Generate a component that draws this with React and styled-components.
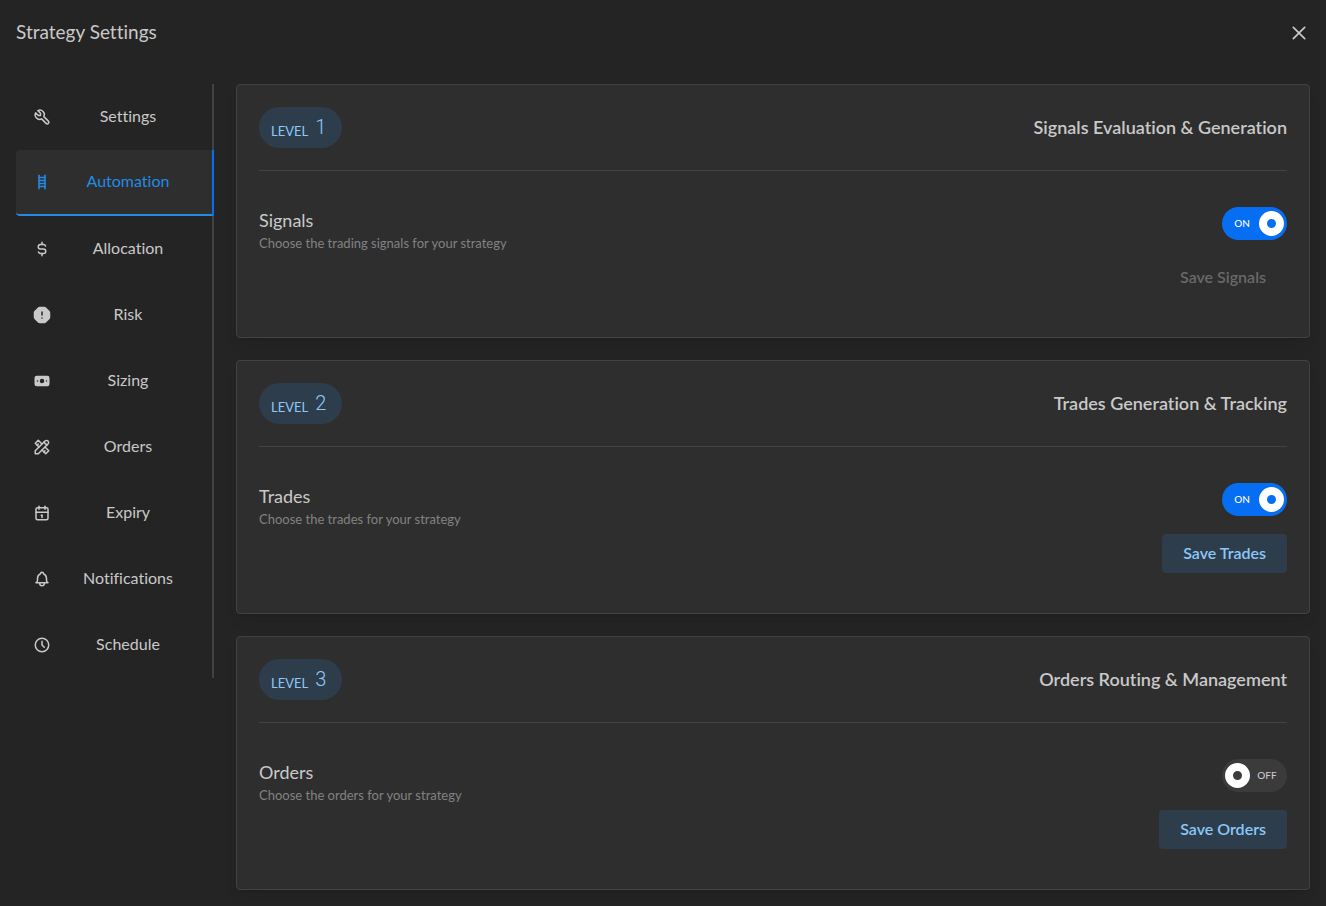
import React, { useState } from 'react';
import styled, { createGlobalStyle } from 'styled-components';
import {
  TbTool,
  TbLadder,
  TbCurrencyDollar,
  TbAlertOctagonFilled,
  TbCashBanknoteFilled,
  TbTools,
  TbCalendar,
  TbBell,
  TbClock,
} from 'react-icons/tb';
import { RxCross2 } from 'react-icons/rx';

const GlobalStyle = createGlobalStyle`
  * {
    box-sizing: border-box;
  }

  body {
    margin: 0;
    background: #242424;
    color: #c9c9c9;
    font-family: Lato, "Open Sans", sans-serif;
    font-size: 16px;
    font-variant-ligatures: none;
    line-height: 24px;
  }

  button {
    font-family: inherit;
    font-variant-ligatures: none;
  }
`;

const Page = styled.div`
  padding: 16px;
`;

const Header = styled.header`
  display: flex;
  align-items: center;
  justify-content: space-between;
  height: 34px;
  margin-bottom: 34px;
`;

const Title = styled.h1`
  margin: 0;
  padding-bottom: 2px;
  font-size: 19px;
  font-weight: 400;
`;

const CloseButton = styled.button`
  display: flex;
  padding: 0;
  border: 0;
  background: none;
  color: #c9c9c9;
  font-size: 22px;
  cursor: pointer;
`;

const Body = styled.div`
  display: flex;
  align-items: flex-start;
  gap: 22px;
`;

const TabList = styled.nav`
  display: flex;
  flex-direction: column;
  flex: 0 0 198px;
`;

const Tab = styled.button`
  display: flex;
  align-items: center;
  height: 66px;
  padding: 0 16px;
  border: 0 solid #424242;
  border-right-width: 2px;
  background: none;
  color: #c9c9c9;
  font-size: 16px;
  cursor: pointer;

  &[aria-current='page'] {
    border-bottom: 2px solid #228be6;
    border-right-color: #066ef2;
    border-radius: 4px 0 0 4px;
    background: #2e2e2e;
    color: #228be6;
  }
`;

const TabIcon = styled.span`
  display: flex;
  width: 20px;
  justify-content: center;
  font-size: 18px;
`;

const TabLabel = styled.span`
  flex: 1;
  padding: 0 0 3px 8px;
  text-align: center;
`;

const Levels = styled.main`
  display: flex;
  flex: 1;
  flex-direction: column;
  gap: 22px;
  min-width: 0;
`;

const Card = styled.section`
  padding: 22px 22px 40px;
  border: 1px solid #424242;
  border-radius: 4px;
  background: #2e2e2e;
  box-shadow: 0 1px 3px rgba(0, 0, 0, 0.05), 0 10px 15px -5px rgba(0, 0, 0, 0.1);
`;

const CardHeader = styled.div`
  display: flex;
  align-items: center;
  justify-content: space-between;
  padding-bottom: 22px;
  border-bottom: 1px solid #424242;
`;

const LevelBadge = styled.div`
  display: flex;
  align-items: flex-start;
  gap: 7px;
  height: 41px;
  padding: 8px 16px 0 12px;
  border-radius: 21px;
  background: #2e3d4b;
  color: #8cc8f8;
  font-size: 13px;
`;

const LevelName = styled.span`
  padding-top: 4px;
`;

const LevelNumber = styled.span`
  font-family: Roboto, sans-serif;
  font-size: 20px;
  font-weight: 300;
`;

const CardTitle = styled.h2`
  margin: 0;
  padding-bottom: 2px;
  font-size: 18px;
  font-weight: 600;
`;

const CardBody = styled.div`
  display: flex;
  justify-content: space-between;
  padding-top: 36px;
`;

const OptionTitle = styled.h3`
  margin: 0;
  font-size: 18px;
  font-weight: 400;
  line-height: 26px;
`;

const OptionText = styled.p`
  margin: 0;
  color: #828282;
  font-size: 13px;
  line-height: 20px;
`;

const Actions = styled.div`
  display: flex;
  flex-direction: column;
  align-items: flex-end;
  gap: 18px;
`;

const Switch = styled.label`
  display: flex;
  flex-direction: ${(props) => (props.$on ? 'row' : 'row-reverse')};
  align-items: center;
  justify-content: space-between;
  width: 65px;
  height: 33px;
  padding: 0 3px;
  border-radius: 17px;
  background: ${(props) => (props.$on ? '#066ef2' : '#3b3b3b')};
  color: ${(props) => (props.$on ? '#ffffff' : '#c9c9c9')};
  font-size: 10px;
  font-weight: 500;
  cursor: pointer;
`;

const SwitchInput = styled.input`
  position: absolute;
  opacity: 0;
  width: 1px;
  height: 1px;
  margin: 0;
`;

const SwitchText = styled.span`
  flex: 1;
  padding-bottom: 2px;
  text-align: center;
`;

const Thumb = styled.span`
  width: 25px;
  height: 25px;
  border: 8px solid #ffffff;
  border-radius: 50%;
`;

const SaveButton = styled.button`
  height: 39px;
  padding: 0 21px 2px;
  border: 0;
  border-radius: 4px;
  background: #2e3d4b;
  color: #8cc8f8;
  font-size: 16px;
  font-weight: 600;
  cursor: pointer;

  &:disabled {
    background: #2e2e2e;
    color: #696969;
    cursor: not-allowed;
  }
`;

const tabs = [
  { name: 'Settings', icon: <TbTool /> },
  { name: 'Automation', icon: <TbLadder /> },
  { name: 'Allocation', icon: <TbCurrencyDollar /> },
  { name: 'Risk', icon: <TbAlertOctagonFilled /> },
  { name: 'Sizing', icon: <TbCashBanknoteFilled /> },
  { name: 'Orders', icon: <TbTools /> },
  { name: 'Expiry', icon: <TbCalendar /> },
  { name: 'Notifications', icon: <TbBell /> },
  { name: 'Schedule', icon: <TbClock /> },
];

const levels = [
  { name: 'Signals', title: 'Signals Evaluation & Generation', text: 'Choose the trading signals for your strategy', on: true, saved: true },
  { name: 'Trades', title: 'Trades Generation & Tracking', text: 'Choose the trades for your strategy', on: true, saved: false },
  { name: 'Orders', title: 'Orders Routing & Management', text: 'Choose the orders for your strategy', on: false, saved: false },
];

const LevelCard = ({ number, level }) => {
  const [on, setOn] = useState(level.on);
  const id = `switch-${level.name.toLowerCase()}`;
  return (
    <Card>
      <CardHeader>
        <LevelBadge>
          <LevelName>LEVEL</LevelName>
          <LevelNumber>{number}</LevelNumber>
        </LevelBadge>
        <CardTitle>{level.title}</CardTitle>
      </CardHeader>
      <CardBody>
        <div>
          <OptionTitle>{level.name}</OptionTitle>
          <OptionText>{level.text}</OptionText>
        </div>
        <Actions>
          <Switch htmlFor={id} $on={on}>
            <SwitchInput
              id={id}
              type="checkbox"
              role="switch"
              aria-label={level.name}
              checked={on}
              onChange={() => setOn(!on)}
            />
            <SwitchText>{on ? 'ON' : 'OFF'}</SwitchText>
            <Thumb />
          </Switch>
          <SaveButton type="button" disabled={level.saved}>Save {level.name}</SaveButton>
        </Actions>
      </CardBody>
    </Card>
  );
};

export default function App() {
  const [active, setActive] = useState('Automation');
  return (
    <Page>
      <GlobalStyle />
      <Header>
        <Title>Strategy Settings</Title>
        <CloseButton type="button" aria-label="Close">
          <RxCross2 />
        </CloseButton>
      </Header>
      <Body>
        <TabList>
          {tabs.map((tab) => (
            <Tab
              key={tab.name}
              type="button"
              aria-current={tab.name === active ? 'page' : undefined}
              onClick={() => setActive(tab.name)}
            >
              <TabIcon>{tab.icon}</TabIcon>
              <TabLabel>{tab.name}</TabLabel>
            </Tab>
          ))}
        </TabList>
        <Levels>
          {levels.map((level, index) => (
            <LevelCard key={level.name} number={index + 1} level={level} />
          ))}
        </Levels>
      </Body>
    </Page>
  );
}
